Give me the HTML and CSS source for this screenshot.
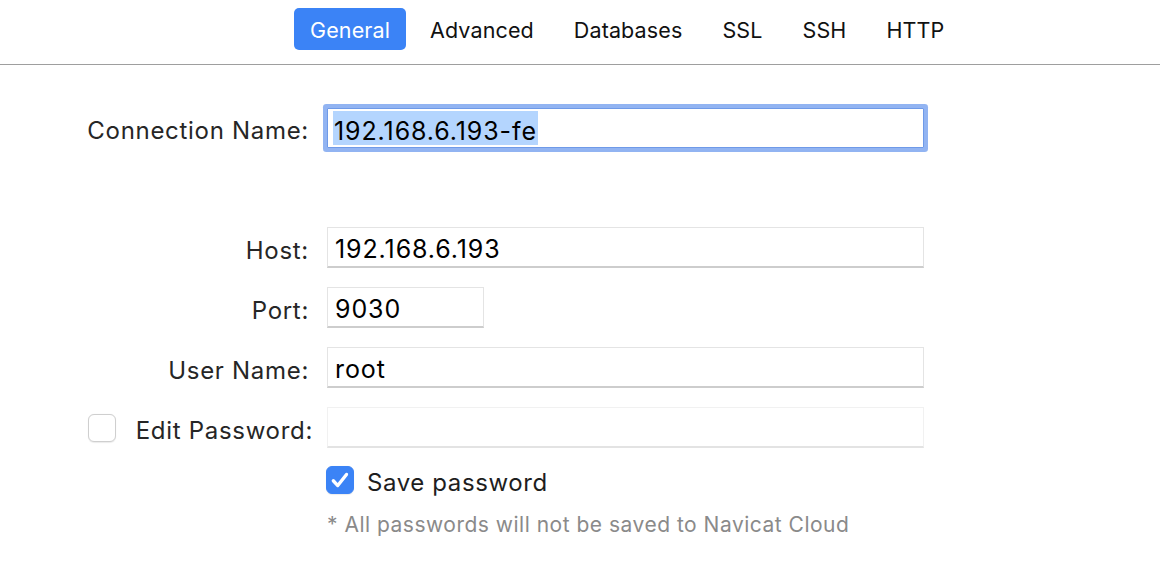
FILE: index.html
```html
<!DOCTYPE html>
<html>
<head>
<meta charset="utf-8">
<link rel="stylesheet" href="styles.css">
</head>
<body>
<div class="tabbar">
  <div class="tab active">General</div>
  <div class="tab">Advanced</div>
  <div class="tab">Databases</div>
  <div class="tab">SSL</div>
  <div class="tab">SSH</div>
  <div class="tab">HTTP</div>
</div>
<div class="form">
  <div class="row row-conn">
    <div class="label">Connection Name:</div>
    <div class="field field-wide focused"><span class="sel">192.168.6.193-fe</span></div>
  </div>
  <div class="row row-host">
    <div class="label">Host:</div>
    <div class="field field-wide">192.168.6.193</div>
  </div>
  <div class="row">
    <div class="label">Port:</div>
    <div class="field field-port">9030</div>
  </div>
  <div class="row">
    <div class="label">User Name:</div>
    <div class="field field-wide">root</div>
  </div>
  <div class="row">
    <div class="label label-check">
      <span class="checkbox"></span>
      <span class="label-text">Edit Password:</span>
    </div>
    <div class="field field-wide disabled"></div>
  </div>
  <div class="save-row">
    <span class="checkbox checked">
      <svg viewBox="0 0 28 28" width="28" height="28"><path d="M6.8 14.8 L11.6 20 L21 8" fill="none" stroke="#fff" stroke-width="3.6" stroke-linecap="round" stroke-linejoin="round"/></svg>
    </span>
    <span class="save-text">Save password</span>
  </div>
  <div class="note">* All passwords will not be saved to Navicat Cloud</div>
</div>
</body>
</html>
```

FILE: styles.css
```css
html, body {
  margin: 0;
  padding: 0;
  background: #ffffff;
}
body {
  font-family: Inter, "Liberation Sans", Arial, sans-serif;
  color: #262626;
  width: 1160px;
  height: 586px;
  overflow: hidden;
}
.tabbar {
  height: 65px;
  border-bottom: 1px solid #9e9e9e;
  box-sizing: border-box;
  display: flex;
  align-items: flex-start;
  padding-left: 294px;
  padding-top: 8px;
  gap: 8px;
}
.tab {
  height: 42px;
  box-sizing: border-box;
  padding: 3px 16px 0;
  line-height: 39px;
  font-size: 21.5px;
  letter-spacing: 0.12px;
  color: #111;
  border-radius: 5px;
}
.tab.active {
  background: #3b83f6;
  color: #fff;
}
.form {
  padding-top: 43px;
}
.row {
  display: flex;
  align-items: center;
  height: 41px;
  margin-bottom: 19px;
}
.row-conn {
  height: 40px;
  margin-bottom: 79px;
}
.label {
  width: 309px;
  text-align: right;
  font-size: 24px;
  letter-spacing: 0.7px;
  box-sizing: border-box;
  padding-top: 5px;
  flex-shrink: 0;
}
.label-check {
  display: flex;
  align-items: center;
  justify-content: space-between;
  padding-left: 88px;
  padding-top: 0;
  margin-right: -4px;
  width: 313px;
}
.label-check .label-text {
  padding-top: 5px;
}
.field {
  margin-left: 18px;
  height: 41px;
  box-sizing: border-box;
  border: 1px solid #e4e4e4;
  border-bottom: 2px solid #cdcdcd;
  font-size: 25px;
  letter-spacing: 0.9px;
  color: #000;
  padding-left: 7px;
  padding-top: 4px;
  display: flex;
  align-items: center;
  background: #fff;
}
.field-wide {
  width: 597px;
}
.field-port {
  width: 157px;
}
.field.disabled {
  border-color: #f1f1f1;
  border-bottom-color: #e3e3e3;
}
.field.focused {
  height: 40px;
  border: 1px solid #6f9ae8;
  box-shadow: 0 0 0 4px #92b4f2;
  border-radius: 1px;
  padding-left: 5px;
  padding-top: 0;
}
.sel {
  background: #b4d5fe;
  line-height: 34px;
  height: 34px;
  padding: 3px 1px 0;
  box-sizing: border-box;
}
.checkbox {
  width: 28px;
  height: 28px;
  box-sizing: border-box;
  border: 1px solid #cfcfcf;
  border-radius: 6px;
  background: #fff;
  display: inline-block;
  box-shadow: 0 0.5px 1px rgba(0,0,0,0.08);
}
.checkbox.checked {
  background: #3b83f6;
  border-color: #3b83f6;
  display: flex;
  align-items: center;
  justify-content: center;
}
.checkbox.checked svg {
  display: block;
}
.save-row {
  display: flex;
  align-items: center;
  height: 28px;
  margin-top: -1px;
  padding-left: 326px;
  gap: 13px;
}
.save-text {
  font-size: 24px;
  letter-spacing: 0.6px;
  color: #1e1e1e;
  padding-top: 4px;
}
.note {
  margin-top: 19px;
  padding-left: 327px;
  font-size: 21px;
  letter-spacing: 0.5px;
  line-height: 24px;
  color: #8a8a8a;
}
```
